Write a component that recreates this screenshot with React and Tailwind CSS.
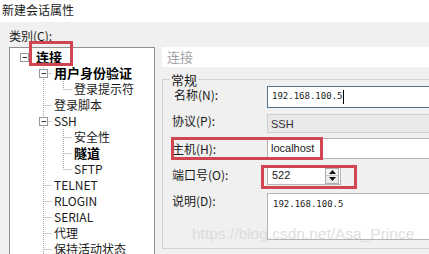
import React from "react";

const TREE = [
  { label: "连接", level: 0, bold: true, button: true },
  { label: "用户身份验证", level: 1, bold: true, button: true },
  { label: "登录提示符", level: 2, last: true },
  { label: "登录脚本", level: 1 },
  { label: "SSH", level: 1, button: true },
  { label: "安全性", level: 2 },
  { label: "隧道", level: 2, bold: true },
  { label: "SFTP", level: 2, last: true },
  { label: "TELNET", level: 1 },
  { label: "RLOGIN", level: 1 },
  { label: "SERIAL", level: 1 },
  { label: "代理", level: 1 },
  { label: "保持活动状态", level: 1 },
];

// column centres and text offsets inside the tree box
const COLS = [13.5, 32.5, 52.5];
const INDENT = [25, 43, 63];
const LINE = "#a3a3a3";

const TreeRow = ({ item }) => {
  const col = COLS[item.level];
  const w = INDENT[item.level];
  return (
    <div className="flex h-4 items-center">
      <svg width={w} height="16" className="shrink-0">
        {item.level === 2 && (
          <line x1={COLS[1]} y1="0" x2={COLS[1]} y2="16" stroke={LINE} strokeDasharray="1 1" />
        )}
        {item.level > 0 && (
          <>
            <line x1={col} y1="0" x2={col} y2={item.last ? 8.5 : 16} stroke={LINE} strokeDasharray="1 1" />
            <line x1={col} y1="8.5" x2={w - 2} y2="8.5" stroke={LINE} strokeDasharray="1 1" />
          </>
        )}
        {item.button && (
          <g>
            <rect x={col - 4} y="4.5" width="8" height="8" fill="#fff" stroke="#9a9a9a" />
            <line x1={col - 2} y1="8.5" x2={col + 2.5} y2="8.5" stroke="#333" />
          </g>
        )}
      </svg>
      <span
        className={
          item.bold
            ? "text-[13px] font-bold leading-4 text-black whitespace-nowrap"
            : "text-[12px] leading-4 text-[#1a1a1a] whitespace-nowrap"
        }
      >
        {item.label}
      </span>
    </div>
  );
};

const Field = ({ label, children, className = "", labelClass = "" }) => (
  <div className={`flex ${className}`}>
    <div className={`w-[95px] shrink-0 text-[12px] leading-4 text-[#1a1a1a] ${labelClass}`}>{label}</div>
    {children}
  </div>
);

export default function App() {
  return (
    <div className="relative w-[429px] h-[254px] overflow-hidden bg-[#f0f0f0] font-['Noto_Sans_CJK_SC',sans-serif]">
      {/* 标题栏 */}
      <div className="h-[22px] bg-white pl-[2px] pt-[2px] text-[12px] leading-4 text-[#1a1a1a]">新建会话属性</div>

      <div className="pl-[9px] pt-[6px]">
        <div className="h-[19px] text-[12px] leading-4 text-[#1a1a1a]">类别(C):</div>

        <div className="flex gap-[7px]">
          {/* 左侧树 */}
          <div className="w-[146px] h-[220px] shrink-0 border border-[#8f8f8f] bg-white pt-px pl-px">
            {TREE.map((item) => (
              <TreeRow key={item.label} item={item} />
            ))}
          </div>

          {/* 右侧面板 */}
          <div className="w-[300px] shrink-0">
            <div className="h-[20px] bg-white pl-[5px] text-[13px] leading-5 text-[#a3a3a3]">连接</div>

            <div className="relative mt-[12px] h-[170px] border border-[#d3d3d3] pt-[6px] pl-[9px]">
              <span className="absolute -top-[8px] left-[7px] bg-[#f0f0f0] px-px text-[13px] leading-4 text-[#1a1a1a]">
                常规
              </span>

              <Field label="名称(N):" className="items-center" labelClass="pl-[2px] -mt-[5px]">
                <div className="flex h-[22px] flex-1 items-center border border-[#4e7690] bg-white pl-[4px] font-['DejaVu_Sans_Mono',monospace] text-[9px] text-[#222]">
                  192.168.100.5
                  <span className="ml-px h-[14px] border-l border-black" />
                </div>
              </Field>

              <Field label="协议(P):" className="mt-[6px] items-center" labelClass="-mt-[6px]">
                <div className="flex h-[19px] flex-1 items-end border border-[#cdcdcd] bg-[#e9e9e9] pl-[3px] font-['Liberation_Sans',sans-serif] text-[11px] leading-4 text-[#333]">
                  SSH
                </div>
              </Field>

              <Field label="主机(H):" className="mt-[5px] items-center">
                <div className="flex h-[21px] flex-1 items-center border border-[#b4b4b4] bg-white pl-[3px] font-['Liberation_Sans',sans-serif] text-[11px] text-[#1a1a1a]">
                  localhost
                </div>
              </Field>

              <Field label="端口号(O):" className="mt-[7px] items-center" labelClass="-mt-[2px]">
                <div className="flex h-[19px] w-[74px] items-center justify-between border border-[#b4b4b4] bg-white pl-[4px] pr-px font-['Liberation_Sans',sans-serif] text-[11px] text-[#1a1a1a]">
                  522
                  <div className="flex h-[16px] w-[14px] flex-col border border-[#adadad]">
                    <div className="flex flex-1 items-center justify-center border-b border-[#c8c8c8] bg-[#f3f3f3]">
                      <svg width="7" height="4" viewBox="0 0 7 4">
                        <path d="M3.5 0 L7 4 L0 4 Z" fill="#111" />
                      </svg>
                    </div>
                    <div className="flex flex-1 items-center justify-center bg-[#ececec]">
                      <svg width="7" height="4" viewBox="0 0 7 4">
                        <path d="M0 0 L7 0 L3.5 4 Z" fill="#111" />
                      </svg>
                    </div>
                  </div>
                </div>
              </Field>

              <Field label="说明(D):" className="mt-[8px] items-start">
                <div className="h-[47px] flex-1 border border-[#b4b4b4] bg-white pl-[5px] pt-[4px] font-['DejaVu_Sans_Mono',monospace] text-[9px] leading-3 text-[#222]">
                  192.168.100.5
                </div>
              </Field>
            </div>
          </div>
        </div>
      </div>

      {/* 标注红框 */}
      <div className="absolute left-[29px] top-[41px] h-[25px] w-[44px] border-[3px] border-[#cf4650]" />
      <div className="absolute left-[171px] top-[137px] h-[23px] w-[152px] border-[3px] border-[#cf4650]" />
      <div className="absolute left-[261px] top-[165px] h-[24px] w-[96px] border-[3px] border-[#cf4650]" />

      {/* 水印 */}
      <div className="absolute left-[192px] top-[226px] whitespace-nowrap font-['Liberation_Sans',sans-serif] text-[15.5px] leading-4 text-[#dcdcdc] opacity-90">
        https://blog.csdn.net/Asa_Prince
      </div>
    </div>
  );
}
